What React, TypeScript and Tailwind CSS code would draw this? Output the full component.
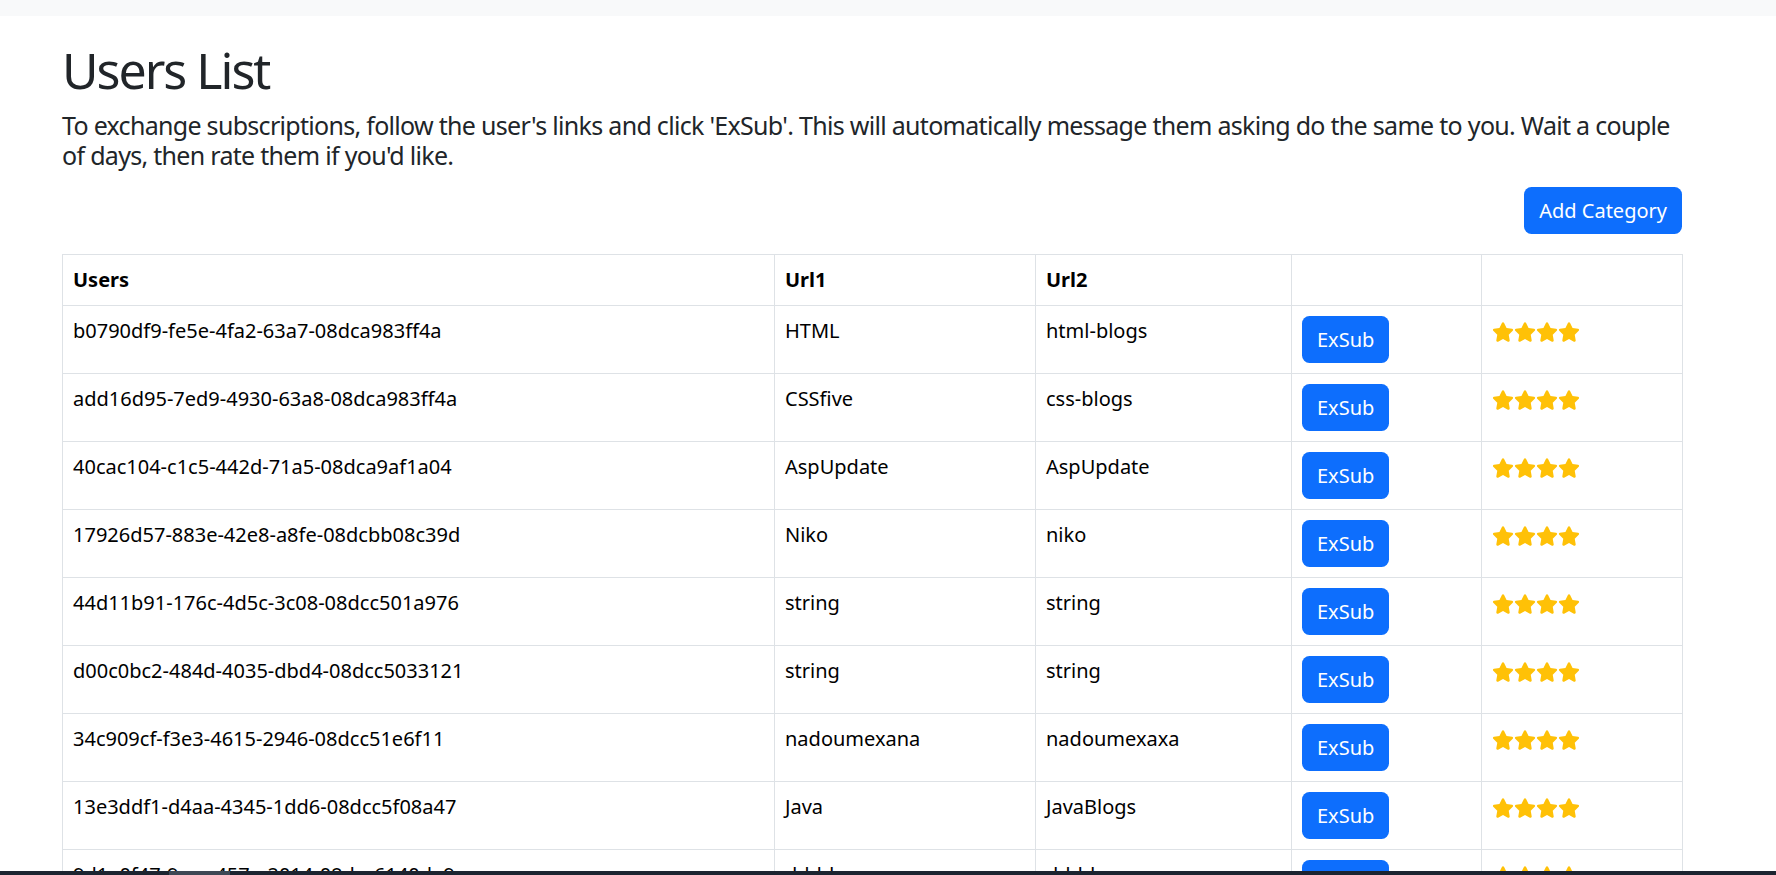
import React from "react";

type UserRow = {
  id: string;
  url1: string;
  url2: string;
};

const users: UserRow[] = [
  { id: "b0790df9-fe5e-4fa2-63a7-08dca983ff4a", url1: "HTML", url2: "html-blogs" },
  { id: "add16d95-7ed9-4930-63a8-08dca983ff4a", url1: "CSSfive", url2: "css-blogs" },
  { id: "40cac104-c1c5-442d-71a5-08dca9af1a04", url1: "AspUpdate", url2: "AspUpdate" },
  { id: "17926d57-883e-42e8-a8fe-08dcbb08c39d", url1: "Niko", url2: "niko" },
  { id: "44d11b91-176c-4d5c-3c08-08dcc501a976", url1: "string", url2: "string" },
  { id: "d00c0bc2-484d-4035-dbd4-08dcc5033121", url1: "string", url2: "string" },
  { id: "34c909cf-f3e3-4615-2946-08dcc51e6f11", url1: "nadoumexana", url2: "nadoumexaxa" },
  { id: "13e3ddf1-d4aa-4345-1dd6-08dcc5f08a47", url1: "Java", url2: "JavaBlogs" },
  { id: "9d1a0f47-9cce-457e-2014-08dcc6140da9", url1: "dddd", url2: "dddd" },
];

function Star() {
  return (
    <svg viewBox="0 0 576 512" className="w-[22px] h-[20px] fill-[#ffc107]">
      <path d="M316.9 18C311.6 7 300.4 0 288.1 0s-23.4 7-28.8 18L195 150.3 51.4 171.5c-12 1.8-22 10.2-25.7 21.7s-.7 24.2 7.9 32.7L137.8 329 113.2 474.7c-2 12 3 24.2 12.9 31.3s23 8 33.8 2.3l128.3-68.5 128.3 68.5c10.8 5.7 23.9 4.9 33.8-2.3s14.9-19.3 12.9-31.3L438.5 329 542.7 225.9c8.6-8.5 11.7-21.2 7.9-32.7s-13.7-19.9-25.7-21.7L381.2 150.3 316.9 18z" />
    </svg>
  );
}

export default function App() {
  return (
    <div className="h-screen flex flex-col overflow-hidden bg-white text-[#212529] font-['Segoe_UI','Noto_Sans',sans-serif]">
      {/* top nav strip */}
      <div className="h-[16px] shrink-0 bg-[#f8f9fa]" />

      <div className="flex-1 overflow-hidden">
        <div className="w-[1620px] ml-[62px] pt-[24px]">
          <h1 className="text-[50px] leading-[60px] font-normal tracking-[-2px] mb-[10px]">Users List</h1>
          <p className="text-[25px] leading-[30px] tracking-[-0.7px] mb-[17px]">
            To exchange subscriptions, follow the user's links and click 'ExSub'. This will automatically message them asking do the same to you. Wait a couple of days, then rate them if you'd like.
          </p>

          <div className="flex justify-end mb-[20px]">
            <button className="h-[47px] px-[15px] rounded-[7.5px] bg-[#0d6efd] text-white text-[20px] leading-[30px]">
              Add Category
            </button>
          </div>

          <table className="w-[1620px] table-fixed border-collapse text-[20px] leading-[30px] text-black">
            <colgroup>
              <col className="w-[712px]" />
              <col className="w-[261px]" />
              <col className="w-[256px]" />
              <col className="w-[190px]" />
              <col className="w-[201px]" />
            </colgroup>
            <thead>
              <tr>
                <th className="border border-[#dee2e6] p-[10px] text-left align-top font-bold">Users</th>
                <th className="border border-[#dee2e6] p-[10px] text-left align-top font-bold">Url1</th>
                <th className="border border-[#dee2e6] p-[10px] text-left align-top font-bold">Url2</th>
                <th className="border border-[#dee2e6] p-[10px]" />
                <th className="border border-[#dee2e6] p-[10px]" />
              </tr>
            </thead>
            <tbody>
              {users.map((u) => (
                <tr key={u.id}>
                  <td className="border border-[#dee2e6] p-[10px] align-top">{u.id}</td>
                  <td className="border border-[#dee2e6] p-[10px] align-top">{u.url1}</td>
                  <td className="border border-[#dee2e6] p-[10px] align-top">{u.url2}</td>
                  <td className="border border-[#dee2e6] p-[10px] align-top">
                    <button className="h-[47px] px-[15px] rounded-[7.5px] bg-[#0d6efd] text-white text-[20px] leading-[30px] block">
                      ExSub
                    </button>
                  </td>
                  <td className="border border-[#dee2e6] p-[10px] align-top">
                    <div className="flex mt-[6px]">
                      <Star />
                      <Star />
                      <Star />
                      <Star />
                    </div>
                  </td>
                </tr>
              ))}
            </tbody>
          </table>
        </div>
      </div>

      {/* bottom scrollbar strip */}
      <div className="h-[4px] shrink-0 bg-[#1c2430] flex">
        <div className="w-[169px]" />
        <div className="w-[61px] bg-[#3e4855]" />
      </div>
    </div>
  );
}
